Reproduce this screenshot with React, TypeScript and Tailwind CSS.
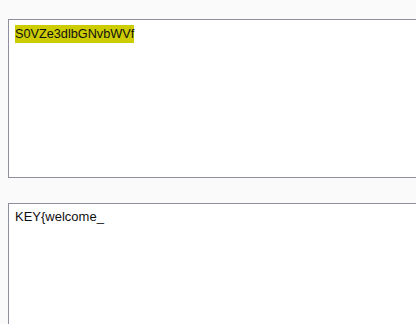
export default function App() {
  return (
    <div className="h-screen w-screen overflow-hidden bg-[#fafafa] font-['Liberation_Sans',Arial,sans-serif] text-[13px] text-[#111]">
      <div className="flex w-[440px] flex-col gap-[25px] pl-2 pt-[19px]">
        {/* first box: encoded text, highlighted */}
        <div className="h-[159px] border border-[#8f8f9d] bg-white pl-[6px] pt-[4px]">
          <span className="inline-block h-[18px] bg-[#cccc00] text-[12.7px] leading-[18px]">S0VZe3dlbGNvbWVf</span>
        </div>
        {/* second box: decoded text */}
        <div className="h-[159px] border border-[#8f8f9d] bg-white pl-[6px] pt-[4px] leading-[18px]">
          KEY{"{"}welcome_
        </div>
      </div>
    </div>
  );
}
